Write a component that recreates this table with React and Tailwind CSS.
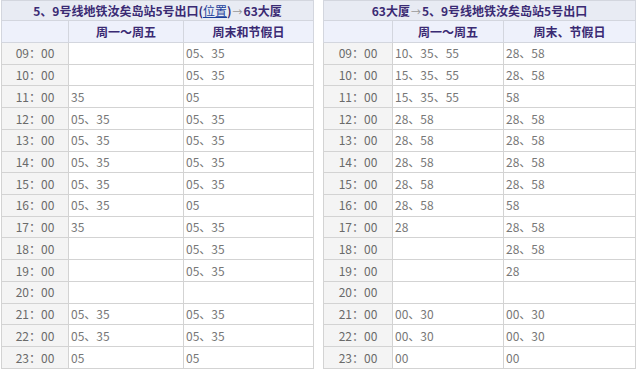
const left = [
  ["09：00", "", "05、35"],
  ["10：00", "", "05、35"],
  ["11：00", "35", "05"],
  ["12：00", "05、35", "05、35"],
  ["13：00", "05、35", "05、35"],
  ["14：00", "05、35", "05、35"],
  ["15：00", "05、35", "05、35"],
  ["16：00", "05、35", "05"],
  ["17：00", "35", "05、35"],
  ["18：00", "", "05、35"],
  ["19：00", "", "05、35"],
  ["20：00", "", ""],
  ["21：00", "05、35", "05、35"],
  ["22：00", "05、35", "05、35"],
  ["23：00", "05", "05"],
];

const right = [
  ["09：00", "10、35、55", "28、58"],
  ["10：00", "15、35、55", "28、58"],
  ["11：00", "15、35、55", "58"],
  ["12：00", "28、58", "28、58"],
  ["13：00", "28、58", "28、58"],
  ["14：00", "28、58", "28、58"],
  ["15：00", "28、58", "28、58"],
  ["16：00", "28、58", "58"],
  ["17：00", "28", "28、58"],
  ["18：00", "", "28、58"],
  ["19：00", "", "28"],
  ["20：00", "", ""],
  ["21：00", "00、30", "00、30"],
  ["22：00", "00、30", "00、30"],
  ["23：00", "00", "00"],
];

const Arrow = () => <span className="text-[#999] font-normal text-[10px] mx-[1px]">→</span>;

const Timetable = ({ title, cols, rows, widths }) => {
  return (
    <table className="table-fixed border-collapse text-[12px] leading-none" style={{ width: widths[0] + widths[1] + widths[2] }}>
      <colgroup>
        <col style={{ width: widths[0] }} />
        <col style={{ width: widths[1] }} />
        <col style={{ width: widths[2] }} />
      </colgroup>
      <thead>
        <tr className="h-[20px]">
          <th colSpan={3} className="bg-[#e8ebf3] border border-[#d3d6de] text-[#3a2a73] font-bold text-center">
            {title}
          </th>
        </tr>
        <tr className="h-[22px]">
          <th className="bg-[#eef1fb] border border-[#d3d6de]"></th>
          <th className="bg-[#eef1fb] border border-[#d3d6de] text-[#3a2a73] font-bold text-center">{cols[0]}</th>
          <th className="bg-[#eef1fb] border border-[#d3d6de] text-[#3a2a73] font-bold text-center">{cols[1]}</th>
        </tr>
      </thead>
      <tbody>
        {rows.map((r) => (
          <tr key={r[0]} className="h-[21.6px]">
            <td className="bg-[#f4f4f4] border border-[#d3d3d3] text-[#6a6a6a] text-center">{r[0]}</td>
            <td className="bg-white border border-[#d3d3d3] text-[#777] pl-[2px]">{r[1]}</td>
            <td className="bg-white border border-[#d3d3d3] text-[#777] pl-[2px]">{r[2]}</td>
          </tr>
        ))}
      </tbody>
    </table>
  );
};

export default function App() {
  return (
    <div
      className="w-[639px] h-[369px] bg-white flex gap-[9px] pl-[1px] overflow-hidden"
      style={{ fontFamily: '"Noto Sans CJK SC", "DejaVu Sans", sans-serif' }}
    >
      <Timetable
        title={
          <>
            5、9号线地铁汝矣岛站5号出口(<span className="underline text-[#1a3f9c] font-normal">位置</span>)
            <Arrow />63大厦
          </>
        }
        cols={["周一～周五", "周末和节假日"]}
        rows={left}
        widths={[67, 115, 130]}
      />
      <Timetable
        title={
          <>
            63大厦<Arrow />5、9号线地铁汝矣岛站5号出口
          </>
        }
        cols={["周一～周五", "周末、节假日"]}
        rows={right}
        widths={[69, 111, 132]}
      />
    </div>
  );
}
